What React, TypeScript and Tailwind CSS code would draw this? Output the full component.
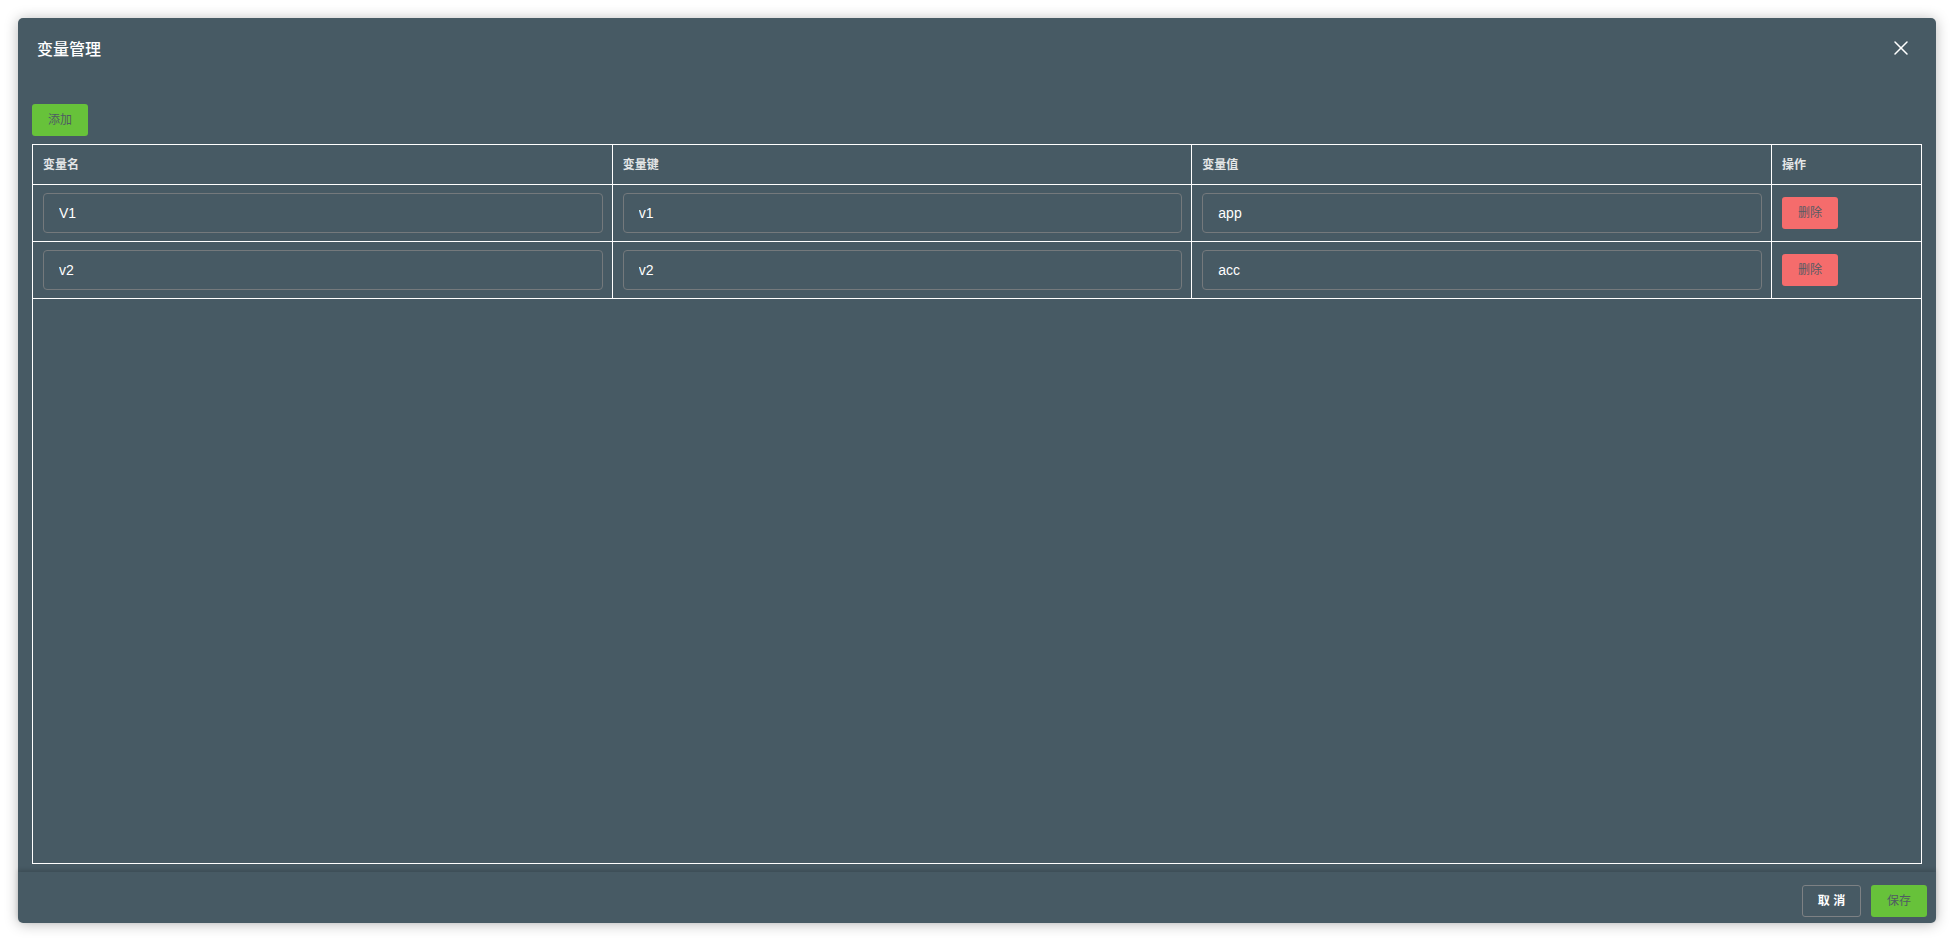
import { useState } from 'react'
import { X } from 'lucide-react'

type Variable = { id: number; name: string; key: string; value: string }

const FONT = "font-['Liberation_Sans','Noto_Sans_CJK_SC',sans-serif]"

const initialRows: Variable[] = [
  { id: 1, name: 'V1', key: 'v1', value: 'app' },
  { id: 2, name: 'v2', key: 'v2', value: 'acc' },
]

export default function App() {
  const [rows, setRows] = useState<Variable[]>(initialRows)

  const update = (id: number, field: keyof Variable, val: string) => {
    setRows(r => r.map(row => (row.id === id ? { ...row, [field]: val } : row)))
  }

  const addRow = () => {
    setRows(r => [...r, { id: Date.now(), name: '', key: '', value: '' }])
  }

  const removeRow = (id: number) => setRows(r => r.filter(row => row.id !== id))

  const inputCls =
    'w-full h-10 px-[15px] rounded-[4px] border border-[#74797c] bg-transparent text-sm text-white outline-none focus:border-[#9aa4a9]'

  return (
    <div className={`${FONT} h-screen w-full bg-white p-[18px] pb-[19px] flex`}>
      <div className="flex-1 flex flex-col rounded-[5px] bg-[#475a64] shadow-[0_1px_14px_rgba(0,0,0,0.28)]">
        {/* header */}
        <div className="h-[64px] flex items-center justify-between pl-[19px] pr-[23px]">
          <h1 className="text-base font-medium text-white">变量管理</h1>
          <button type="button" className="-mt-1 text-white">
            <X size={24} strokeWidth={1.5} />
          </button>
        </div>

        {/* body */}
        <div className="flex-1 flex flex-col px-[14px] pt-[22px] pb-2">
          <div>
            <button
              type="button"
              onClick={addRow}
              className="h-8 w-14 rounded-[3px] bg-[#67c23a] text-xs text-[#4f5b63]"
            >
              添加
            </button>
          </div>

          <div className="mt-2 flex-1 flex flex-col border border-white">
            <div className="grid grid-cols-[1fr_1fr_1fr_149px] h-10 border-b border-white text-xs font-bold text-[#e4e6e7]">
              <div className="flex items-center px-[10px] border-r border-white">变量名</div>
              <div className="flex items-center px-[10px] border-r border-white">变量键</div>
              <div className="flex items-center px-[10px] border-r border-white">变量值</div>
              <div className="flex items-center px-[10px]">操作</div>
            </div>

            {rows.map(row => (
              <div key={row.id} className="grid grid-cols-[1fr_1fr_1fr_149px] h-[57px] border-b border-white">
                <div className="flex items-center pl-[10px] pr-[9px] border-r border-white">
                  <input className={inputCls} value={row.name} onChange={e => update(row.id, 'name', e.target.value)} />
                </div>
                <div className="flex items-center pl-[10px] pr-[9px] border-r border-white">
                  <input className={inputCls} value={row.key} onChange={e => update(row.id, 'key', e.target.value)} />
                </div>
                <div className="flex items-center pl-[10px] pr-[9px] border-r border-white">
                  <input className={inputCls} value={row.value} onChange={e => update(row.id, 'value', e.target.value)} />
                </div>
                <div className="flex items-center px-[10px]">
                  <button
                    type="button"
                    onClick={() => removeRow(row.id)}
                    className="h-8 w-14 rounded-[3px] bg-[#f56c6c] text-xs text-[#555b63]"
                  >
                    删除
                  </button>
                </div>
              </div>
            ))}
          </div>
        </div>

        {/* footer */}
        <div className="h-[51px] flex justify-end gap-[10px] pt-[13px] pr-[9px] rounded-b-[5px] shadow-[0_-2px_4px_rgba(0,0,0,0.16)]">
          <button
            type="button"
            className="h-8 w-[59px] rounded-[3px] border border-[#7d8184] text-xs font-bold text-white"
          >
            取 消
          </button>
          <button type="button" className="h-8 w-14 rounded-[3px] bg-[#67c23a] text-xs text-[#4f5b63]">
            保存
          </button>
        </div>
      </div>
    </div>
  )
}
